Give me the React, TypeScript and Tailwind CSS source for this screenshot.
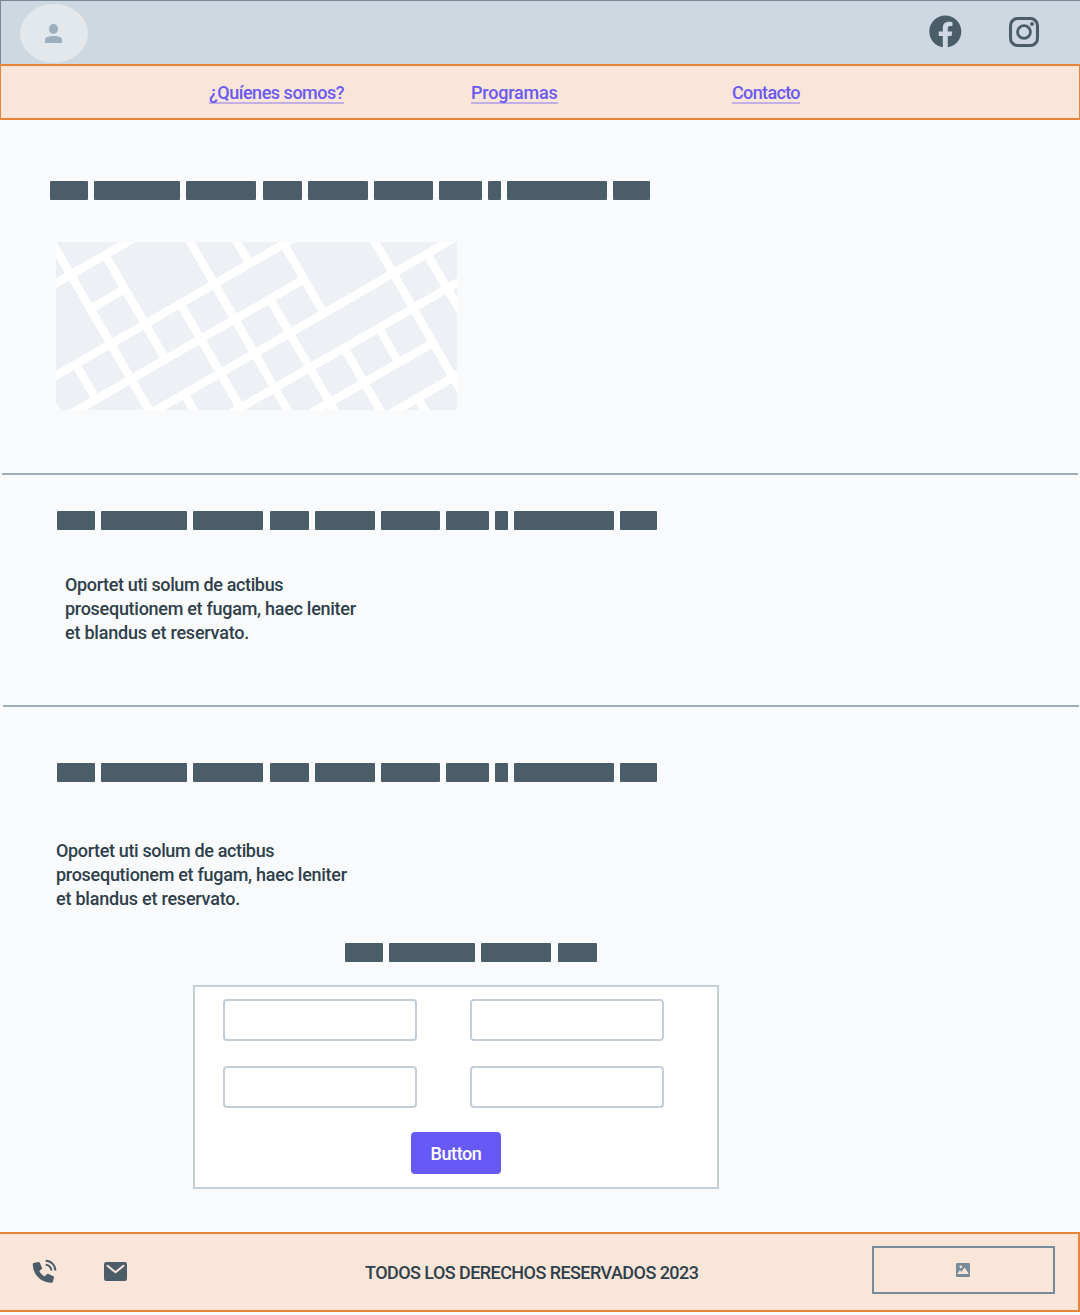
import { IoLogoFacebook } from "react-icons/io5";

const WORDS = [38, 86, 70, 39.3, 60, 59, 42.3, 13.2, 99.8, 36.8];

function Bars({ count = 10 }: { count?: number }) {
  return (
    <div className="flex h-[19px] gap-[6.2px]">
      {WORDS.slice(0, count).map((w, i) => (
        <div key={i} className="shrink-0 rounded-[1px] bg-[#4c5d6a]" style={{ width: w }} />
      ))}
    </div>
  );
}

const K = 0.5774;
const S = 1.732;

// Streets rising to the right: [intercept, x start, x end]
const RISING = [
  [41.3, -10, 90],
  [133.5, -10, 250],
  [180.5, 0, 246],
  [226, 80, 410],
  [272.3, 160, 410],
  [318.5, 240, 377],
  [364.8, 320, 410],
  [86.6, 36, 66],
];

// Streets falling to the right: [intercept, x start, x end]
const FALLING = [
  [7.2, -10, 100],
  [-72.5, 50, 108],
  [-232.5, 125, 240],
  [-313.5, 175, 193],
  [-153.5, 124, 184],
  [87.8, 20, 40],
  [168.7, -6, 10],
  [-70, 128, 142],
  [-392.5, 228, 268],
  [-313.5, 214, 285],
  [-393, 288, 330],
  [-473, 323, 343],
  [-552.5, 312, 410],
  [-631, 371, 410],
  [-471, 362, 375],
];

function StreetMap() {
  return (
    <svg width="401" height="168" viewBox="0 0 401 168" className="block bg-[#edf0f5]">
      <g stroke="#fff" strokeWidth="8.300">
        {RISING.map(([c, a, b], i) => (
          <line key={i} x1={a} y1={c - K * a} x2={b} y2={c - K * b} />
        ))}
        {FALLING.map(([d, a, b], i) => (
          <line key={i} x1={a} y1={S * a + d} x2={b} y2={S * b + d} />
        ))}
      </g>
    </svg>
  );
}

function Paragraph() {
  return (
    <p className="whitespace-nowrap text-[18px] leading-6 font-medium text-[#2f3f4b]">
      <span className="block tracking-[-0.36px]">Oportet uti solum de actibus</span>
      <span className="block tracking-[-0.28px]">prosequtionem et fugam, haec leniter</span>
      <span className="block tracking-[-0.22px]">et blandus et reservato.</span>
    </p>
  );
}

function Field() {
  return <input className="h-[42px] w-[194px] rounded-[4px] border-2 border-[#c3ced8] bg-white px-3 outline-none" />;
}

const link = "h-[22px] border-b-2 border-[#c2afe6] whitespace-nowrap leading-[22px]";

export default function App() {
  return (
    <div className="h-[1315px] w-[1080px] overflow-hidden bg-[#f8fafc] font-['Roboto',sans-serif]">
      <header className="flex h-16 border-t border-l border-[#778899] bg-[#ced8e1]">
        <div className="mt-[3px] ml-[19px] h-[59px] w-[68px] rounded-[50%] bg-[#e2e8ec] pt-5 pl-[25px]">
          <svg width="17" height="19" viewBox="135 72 51 57" fill="#9dafbd">
            <ellipse cx="160.500" cy="87" rx="13.500" ry="15" />
            <path d="M135 129V119C135 111 148 108 160.500 108S186 111 186 119V129Z" />
          </svg>
        </div>
        <div className="mt-[12px] ml-auto flex w-[153px] text-[#4c5d6a]">
          <IoLogoFacebook size={36.6} />
          <svg width="30" height="30" viewBox="0 0 90 90" fill="none" stroke="currentColor" className="mt-1 ml-[45.4px]">
            <rect x="4.600" y="4.600" width="80.800" height="80.800" rx="21" strokeWidth="9.200" />
            <circle cx="45" cy="45" r="19.300" strokeWidth="8.500" />
            <circle cx="69" cy="21" r="5.800" fill="currentColor" stroke="none" />
          </svg>
        </div>
      </header>
      <nav className="flex h-14 border-x border-y-2 border-[#e8853a] bg-[#f9e6d9] pt-4 text-[18px] font-medium text-[#6a5af2]">
        <a className={link + " ml-[208px] w-[135px] tracking-[-0.48px]"}>¿Quíenes somos?</a>
        <a className={link + " ml-[127px] w-[87px] tracking-[-0.2px]"}>Programas</a>
        <a className={link + " ml-[174px] w-[68px] tracking-[-0.65px]"}>Contacto</a>
      </nav>

      <section className="h-[353px] pt-[61px] pl-[50px]">
        <Bars />
        <div className="mt-[42px] ml-[6px]">
          <StreetMap />
        </div>
      </section>

      <hr className="mx-[2px] h-[2px] border-0 bg-[#9dafbd]" />
      <section className="h-[230px] pt-9 pl-[57px]">
        <Bars />
        <div className="mt-[43px] ml-[8px]">
          <Paragraph />
        </div>
      </section>

      <hr className="mr-px ml-[3px] h-[2px] border-0 bg-[#9dafbd]" />
      <section className="h-[525px] pt-14 pl-[56px]">
        <div className="ml-px">
          <Bars />
        </div>
        <div className="mt-[57px]">
          <Paragraph />
        </div>
        <div className="mt-8 ml-[289px]">
          <Bars count={4} />
        </div>
        <form className="mt-[23px] ml-[137px] flex h-[204px] w-[526px] flex-col items-center border-2 border-[#c3d0da] bg-white pt-3">
          <div className="mr-[25px] grid grid-cols-2 gap-x-[53px] gap-y-[25px]">
            <Field />
            <Field />
            <Field />
            <Field />
          </div>
          <button type="button" className="mt-6 h-[42px] w-[90px] rounded-[4px] bg-[#6759f5] pt-px text-[18px] font-medium tracking-[-0.4px] text-white">
            Button
          </button>
        </form>
      </section>

      <footer className="flex h-20 items-start border-y-2 border-r-2 border-[#e8853a] bg-[#f9e6d9] text-[#4c5d6a]">
        <svg width="25" height="25" viewBox="96 102 75 75" fill="none" className="mt-[25px] ml-8">
          <path
            d="M101 114 116 111Q118.500 110.500 119.500 113L126 128Q127 130.500 124.500 132.500L118 138.500Q123.500 149 134 154.500L140 147.500Q142 145.500 144.500 146.500L160 153.500Q162.500 155 162 157.500L158.500 171Q158 173.500 155 173.500C123 173 98.500 149 98.500 117.500Q98.500 114.500 101 114Z"
            fill="currentColor"
          />
          <path d="M137 107.500A29 29 0 0 1 166 136.500M137 119.500A17 17 0 0 1 154 136.500" stroke="currentColor" strokeWidth="6" />
        </svg>
        <svg width="23" height="19" viewBox="0 0 69 57" className="mt-7 ml-[47px]">
          <rect width="69" height="57" rx="7" fill="currentColor" />
          <path d="M10.500 11.500 34.500 31 58.500 11.500" fill="none" stroke="#f9e6d9" strokeWidth="6" strokeLinecap="round" strokeLinejoin="round" />
        </svg>
        <p className="mt-[27px] ml-[238px] w-[334px] text-[18px] leading-6 font-medium tracking-[-0.56px] whitespace-nowrap text-[#2f3f4b]">
          TODOS LOS DERECHOS RESERVADOS 2023
        </p>
        <div className="mt-3 mr-[23px] ml-auto flex h-12 w-[183px] items-center border-2 border-[#778b9b] pl-[82px]">
          <svg width="14" height="14" viewBox="0 0 14 14">
            <rect width="14" height="14" rx="1.300" fill="#778b9b" />
            <path d="M1.200 11 3.900 7l1.500 2L8.700 4.500 12.800 11Z" fill="#f9e6d9" />
            <circle cx="4.800" cy="3.800" r="1.400" fill="#f9e6d9" />
          </svg>
        </div>
      </footer>
    </div>
  );
}
